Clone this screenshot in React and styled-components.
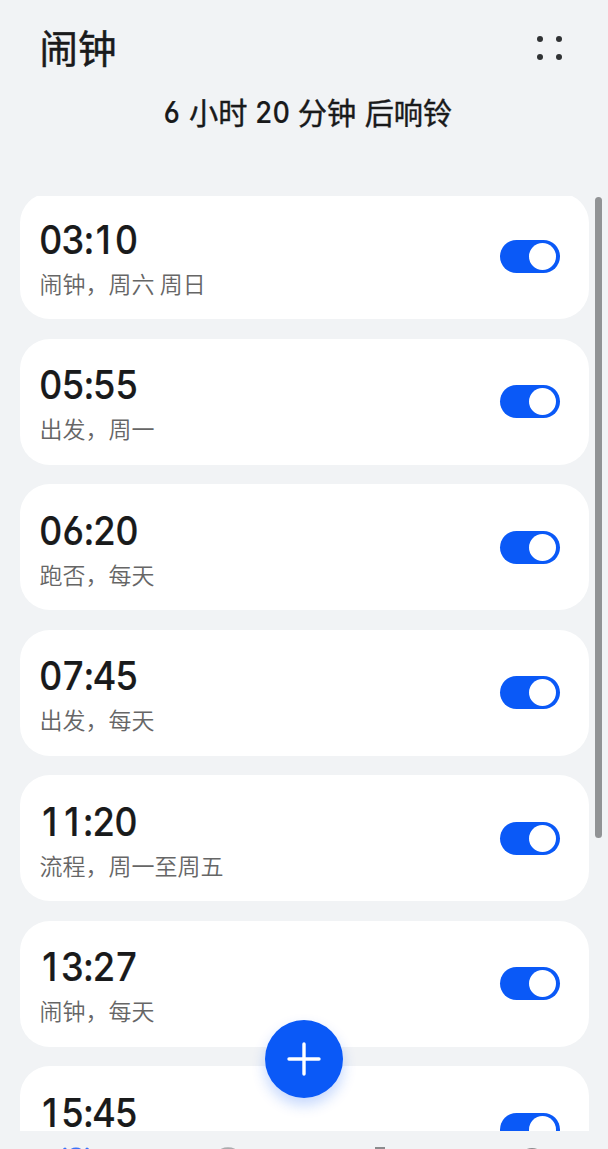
import React from "react";
import styled, { createGlobalStyle } from "styled-components";

const Global = createGlobalStyle`
  * { box-sizing: border-box; }
  body {
    margin: 0;
    background: #f1f3f5;
    color: #191a1b;
    font-family: "Noto Sans CJK SC", sans-serif;
  }
`;
const Screen = styled.main`
  position: relative;
  display: flex;
  flex-direction: column;
  width: 608px;
  height: 1149px;
  overflow: hidden;
`;
const Header = styled.header`
  display: flex;
  align-items: center;
  justify-content: space-between;
  height: 96px;
  padding: 0 46px 0 39.5px;
`;
const Title = styled.h1`
  margin: 0;
  padding-bottom: 4px;
  font-size: 38.5px;
  line-height: 56px;
  font-weight: 400;
  -webkit-text-stroke: 0.5px currentColor;
`;
const MenuButton = styled.button`
  display: grid;
  grid-template-columns: 6px 6px;
  gap: 12px 12.7px;
  padding: 0;
  border: 0;
  background: none;
`;
const Dot = styled.span`
  width: 6px;
  height: 6px;
  border-radius: 50%;
  background: #303234;
`;
const NextAlarm = styled.p`
  display: flex;
  align-items: flex-start;
  justify-content: center;
  gap: 8.5px;
  margin: -1px 0 0;
  height: 101px;
  padding-left: 8px;
  font-size: 29.2px;
  line-height: 32px;
  font-weight: 400;
  -webkit-text-stroke: 0.4px currentColor;
`;
const Count = styled.span`
  width: ${(p) => p.$digits * 16.7}px;
  padding-top: 1px;
  margin-left: -1px;
  margin-right: 1px;
  font-family: "Inter", sans-serif;
  font-size: 30px;
  font-weight: 500;
  font-feature-settings: "tnum", "cv03";
  -webkit-text-stroke: 0.2px currentColor;
  transform: scaleX(0.9);
  transform-origin: 0 50%;
`;
const List = styled.section`
  display: flex;
  flex-direction: column;
  gap: 19.5px;
  height: 935px;
  padding: 0 19.5px;
  overflow: hidden;
`;
const Card = styled.article`
  display: flex;
  flex: none;
  align-items: center;
  justify-content: space-between;
  height: 126px;
  padding: 0 29px 0 20px;
  border-radius: 30px;
  background: #fff;
  &:first-child { margin-top: -3px; }
`;
const Time = styled.div`
  padding-top: 3px;
  margin: 0 0 4px -0.7px;
  font-family: "Inter", sans-serif;
  font-feature-settings: "tnum", "cv03";
  font-size: 40px;
  line-height: 46px;
  font-weight: 500;
  letter-spacing: -1.1px;
  -webkit-text-stroke: 0.2px currentColor;
  transform: scaleX(0.905);
  transform-origin: 0 50%;
`;
const One = styled.span`
  display: inline-block;
  width: 24.4px;
  padding-left: 3.5px;
  font-feature-settings: "pnum", "tnum" 0;
`;
const Label = styled.div`
  color: #666;
  font-size: 23px;
  line-height: 32px;
  font-weight: 350;
`;
const Switch = styled.button`
  display: flex;
  justify-content: flex-end;
  width: 60px;
  height: 33px;
  padding: 3px 3.5px;
  border: 0;
  border-radius: 17px;
  background: #0a59f7;
`;
const Knob = styled.span`
  width: 27px;
  height: 27px;
  border-radius: 50%;
  background: #fff;
`;
const Scrollbar = styled.div`
  position: absolute;
  top: 197px;
  right: 6px;
  width: 7px;
  height: 641px;
  border-radius: 4px;
  background: #919395;
`;
const AddButton = styled.button`
  position: absolute;
  left: 265px;
  top: 1020.4px;
  display: grid;
  place-items: center;
  width: 78px;
  height: 78px;
  padding: 0;
  border: 0;
  border-radius: 50%;
  background: #0a59f7;
  box-shadow: 0 7px 14px rgba(10, 89, 247, 0.24);
`;
const TabBar = styled.nav`
  display: grid;
  grid-template-columns: repeat(4, 1fr);
  height: 18px;
  overflow: hidden;
`;
const Tab = styled.div`
  display: flex;
  justify-content: center;
  padding-top: 15px;
`;

const alarms = [
  ["03:10", "闹钟，周六 周日"],
  ["05:55", "出发，周一"],
  ["06:20", "跑否，每天"],
  ["07:45", "出发，每天"],
  ["11:20", "流程，周一至周五"],
  ["13:27", "闹钟，每天"],
  ["15:45", ""],
];

function Alarm({ time, label }) {
  return (
    <Card>
      <div>
        <Time>
          {[...time].map((char, i) => (char === "1" ? <One key={i}>1</One> : char))}
        </Time>
        <Label>{label || "\u00a0"}</Label>
      </div>
      <Switch role="switch" aria-checked="true" aria-label={time}>
        <Knob />
      </Switch>
    </Card>
  );
}

export default function App() {
  return (
    <Screen>
      <Global />
      <Header>
        <Title>闹钟</Title>
        <MenuButton aria-label="菜单"><Dot /><Dot /><Dot /><Dot /></MenuButton>
      </Header>
      <NextAlarm>
        <Count $digits={1}>6</Count>
        <span>小时</span>
        <Count $digits={2}>20</Count>
        <span>分钟</span>
        <span>后响铃</span>
      </NextAlarm>
      <List>
        {alarms.map(([time, label]) => <Alarm key={time} time={time} label={label} />)}
      </List>
      <TabBar>
        <Tab>
          <svg width="38" height="38" viewBox="0 0 38 38" fill="none" stroke="#3c72f8" strokeWidth="3" strokeLinecap="round">
            <path d="M15 4C17 2.8 21 2.8 23 4M4 7L8 3M30 3L34 7" />
          </svg>
        </Tab>
        <Tab>
          <svg width="38" height="38" viewBox="0 0 38 38">
            <circle cx="19" cy="19.3" r="18" fill="#a9abad" />
          </svg>
        </Tab>
        <Tab>
          <svg width="38" height="38" viewBox="0 0 38 38" fill="none" stroke="#8a8c8e" strokeWidth="3">
            <path d="M14 2.5H24M19 2V8" />
            <circle cx="19" cy="22" r="14" />
          </svg>
        </Tab>
        <Tab>
          <svg width="38" height="38" viewBox="0 0 38 38" fill="none" stroke="#8a8c8e" strokeWidth="3">
            <circle cx="19" cy="15.5" r="12" />
          </svg>
        </Tab>
      </TabBar>
      <Scrollbar />
      <AddButton aria-label="添加">
        <svg width="34" height="34" viewBox="0 0 34 34" stroke="#fff" strokeWidth="3.4" strokeLinecap="round">
          <path d="M17 2V32M2 17H32" />
        </svg>
      </AddButton>
    </Screen>
  );
}
